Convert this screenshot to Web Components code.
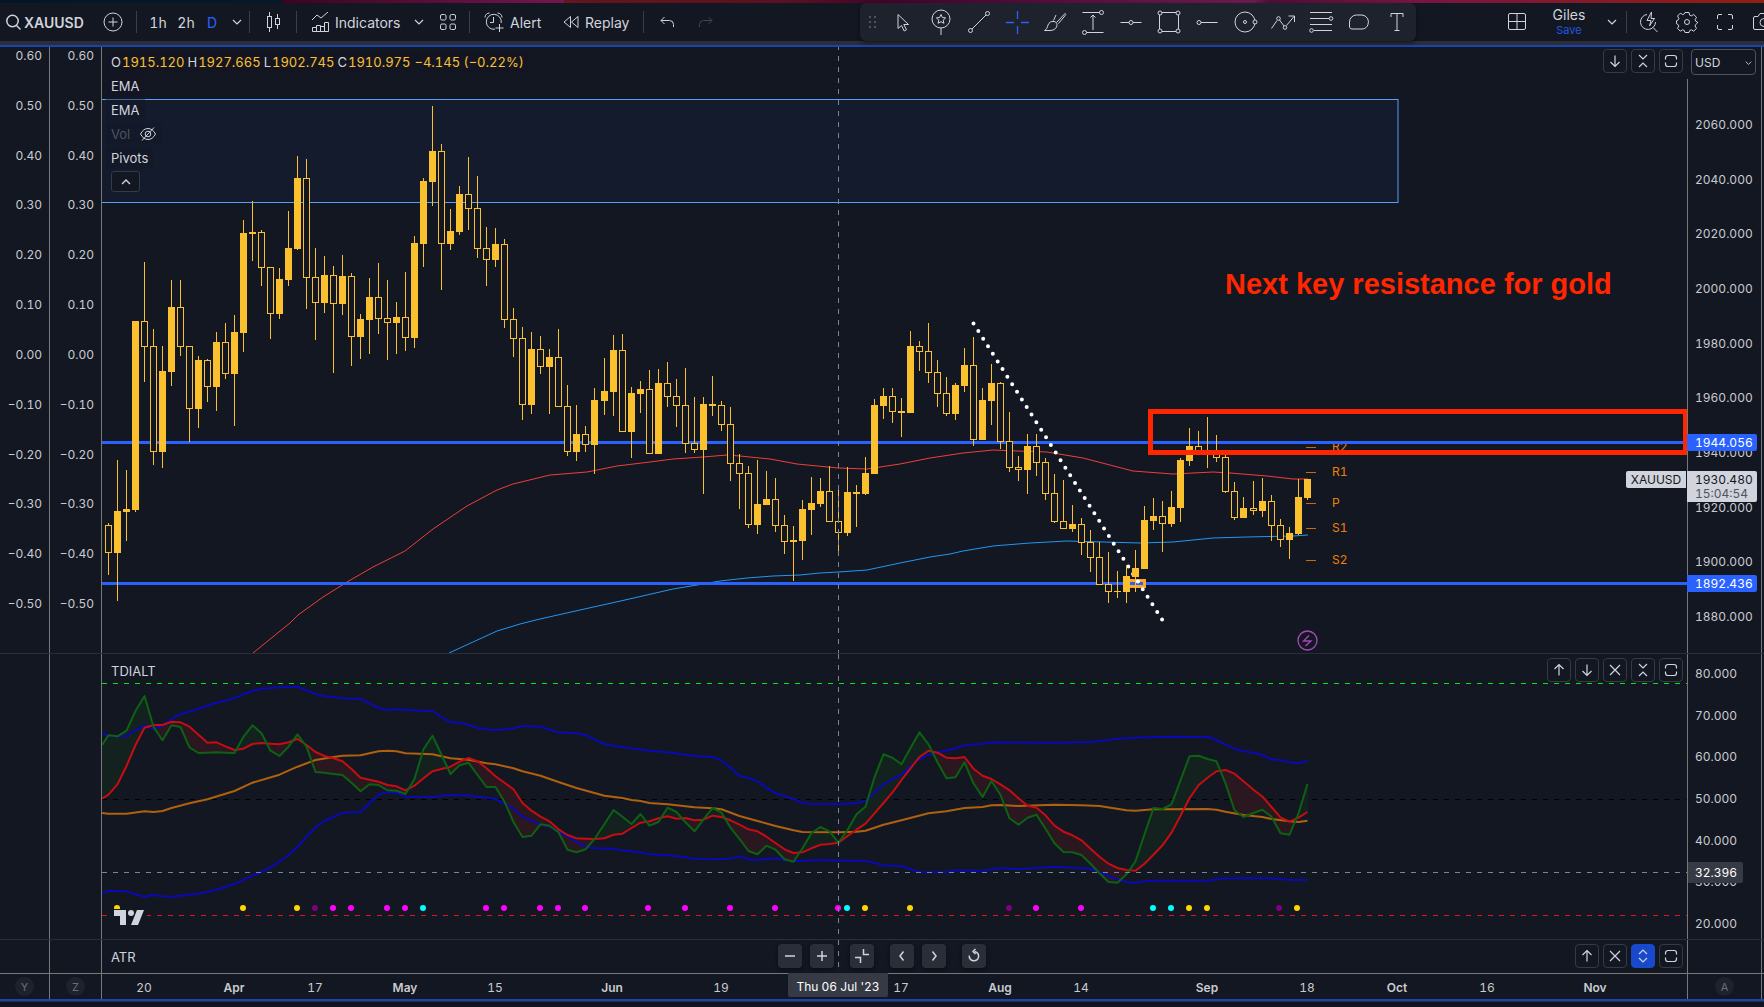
<!DOCTYPE html>
<html lang="en">
<head>
<meta charset="utf-8">
<title>XAUUSD chart</title>
<style>
  html, body { margin: 0; height: 100%; background: #11141f; }
  body { font-family: Inter, "Liberation Sans", sans-serif; color: #d1d4dc; font-variant-numeric: tabular-nums; }
</style>
</head>
<body>
<chart-app></chart-app>
<script>
const svg = (w, h, body) => `<svg width="${w}" height="${h}" viewBox="0 0 ${w} ${h}" fill="none" stroke="currentColor" aria-hidden="true">${body}</svg>`;

const ICONS = {
  search: svg(16, 18, '<circle cx="7.5" cy="8" r="5.7" stroke-width="1.5"/><path d="M11.5 12.5l4 4" stroke-width="1.5"/>'),
  plus: svg(20, 20, '<circle cx="10" cy="10" r="9"/><path d="M10 5.5v9M5.5 10h9"/>'),
  chevron: svg(10, 6, '<path d="M1 1l4 4 4-4" stroke-width="1.2"/>'),
  candles: svg(16, 22, '<path d="M4.5 1v4M4.5 17v4M12.5 3v4M12.5 14v4"/><rect x="2.5" y="5.5" width="4" height="11"/><rect x="10.5" y="7.5" width="4" height="6"/>'),
  indicators: svg(20, 20, '<path d="M1 8l5-5 4 3 7-6M1.5 19.5v-4h4v4zM5.5 19.5v-6h4v6zM9.5 19.5v-5h4v5zM13.5 19.5v-9h4v9z"/>'),
  grid: svg(18, 18, '<rect x="1.5" y="1.5" width="5.5" height="5.5" rx="1.5"/><rect x="11" y="1.5" width="5.5" height="5.5" rx="1.5"/><rect x="1.5" y="11" width="5.5" height="5.5" rx="1.5"/><rect x="11" y="11" width="5.5" height="5.5" rx="1.5"/>'),
  alert: svg(20, 20, '<path d="M11 17.2a7.5 7.5 0 1 1 6.2-6.2M9.5 5v5.5H6M1 5.5a4.5 4.5 0 0 1 4.5-4.5M18 5.5A4.5 4.5 0 0 0 13.5 1M15.500 12v8M11.5 16h8"/>'),
  replay: svg(16, 14, '<path d="M7.5 1.5v11L1 7zM15 1.5v11L8.500 7z" stroke-linejoin="round"/>'),
  undo: svg(15, 12, '<path d="M4.5 1L1 4.5 4.5 8M1 4.5h8.5a4 4 0 0 1 4 4V11"/>'),
  redo: svg(15, 12, '<path d="M10.5 1L14 4.5 10.5 8M14 4.5H5.5a4 4 0 0 0-4 4V11"/>'),
  grip: svg(10, 14, '<g fill="currentColor" stroke="none"><rect x="1" y="1" width="2" height="2"/><rect x="6" y="1" width="2" height="2"/><rect x="1" y="6" width="2" height="2"/><rect x="6" y="6" width="2" height="2"/><rect x="1" y="11" width="2" height="2"/><rect x="6" y="11" width="2" height="2"/></g>'),
  cursor: svg(28, 28, '<path d="M9 6.5v14l3.5-3 2.7 5.5 2.3-1.2-2.7-5.3h4.7z"/>'),
  pin: svg(28, 28, '<circle cx="14" cy="11" r="9"/><path d="M14 20v7M14 6.5l1.4 3 3.2.4-2.4 2.2.7 3.2-2.9-1.6-2.9 1.6.7-3.2-2.4-2.2 3.2-.4z"/>'),
  line: svg(28, 28, '<circle cx="22.5" cy="5.5" r="2"/><circle cx="5.5" cy="22.5" r="2"/><path d="M21 7L7 21"/>'),
  cross: svg(28, 28, '<path d="M14.5 3v8M14.5 18v8M3 14.5h8M18 14.5h8" stroke-width="1.3"/>'),
  brush: svg(28, 28, '<path d="M3.5 22.500c2.500-1 2.500-3 3.500-5.500s3-4 6-3.500 3.500 3 2.500 5.500-4 3.500-6.500 3.500zM15.500 14.500L24.500 5M12.500 12.500l2.500-5.500M17.500 15.500L25 6.500"/>'),
  position: svg(28, 28, '<circle cx="22.5" cy="4.5" r="2"/><circle cx="5.5" cy="24.5" r="2"/><path d="M3.5 4.5h17M7.5 24.5h17M14 22V7M11.5 9.5L14 7l2.5 2.5"/>'),
  hline: svg(28, 28, '<circle cx="14" cy="14.5" r="2"/><path d="M3.5 14.5H12M16 14.5h8.5"/>'),
  rect: svg(28, 28, '<circle cx="5" cy="5" r="2"/><circle cx="23" cy="5" r="2"/><circle cx="5" cy="23" r="2"/><circle cx="23" cy="23" r="2"/><path d="M7 4.5h14M7 23.5h14M4.5 7v14M23.5 7v14"/>'),
  ray: svg(28, 28, '<circle cx="6" cy="14.5" r="2"/><path d="M8 14.5h16.5"/>'),
  circle: svg(28, 28, '<circle cx="14" cy="14" r="10"/><circle cx="14" cy="14" r="1.5"/><circle cx="24" cy="14" r="2" fill="#1e222d"/>'),
  path: svg(28, 28, '<path d="M2.5 20.5l5.5-8M10.5 12l4.5 6M17.500 17.5l7.5-9M19.5 8h6v6"/><circle cx="9.5" cy="10.5" r="1.8"/><circle cx="16" cy="19.5" r="1.8"/>'),
  fib: svg(28, 28, '<path d="M3 4.5h22M3 10.5h19M3 16.5h22M7 22.5h18"/><circle cx="24" cy="10.5" r="1.8"/><circle cx="4.5" cy="22.5" r="1.8"/>'),
  shape: svg(28, 28, '<path d="M4.5 14a7 7 0 0 1 7-7h5.5a7 7 0 0 1 6 9.5c-1 2.5-2.5 4.5-6 4.5H7c-2 0-2.5-1.5-2.5-3z"/>'),
  text: svg(28, 28, '<path d="M8 9V5.5h12V9M14 5.5v17M11.5 22.5h5"/>'),
  layout: svg(20, 20, '<rect x="1.5" y="1.5" width="17" height="16" rx="1.5"/><path d="M10 1.5v16M1.5 9.5h17"/>'),
  quick: svg(20, 22, '<path d="M8 3.500a7.500 7.500 0 1 0 8.500 7.500M14 16.500l4.500 4.500M12.500 1L8 9.500h4l-1.500 5.500 5-7.500h-3.500z"/>'),
  gear: svg(22, 22, '<circle cx="11" cy="11" r="2.5"/><path d="M9 1.5h4l.7 2.700 1.600.7 2.400-1.400 2.800 2.800-1.400 2.400.7 1.600 1.700.7v1l-2 1.700-.4 1.300 1.400 2.400-2.800 2.800-2.400-1.400-1.600.7-.7 2h-4l-.7-2-1.600-.7-2.400 1.400-2.800-2.800 1.400-2.400-.7-1.300-1.700-1v-3l1.700-.7.7-1.600-1.400-2.400 2.800-2.800 2.400 1.400 1.600-.7z"/>'),
  full: svg(18, 18, '<path d="M1.5 6V3a1.5 1.5 0 0 1 1.5-1.5h3M12 1.5h3A1.5 1.5 0 0 1 16.500 3v3M16.5 12v3a1.5 1.5 0 0 1-1.5 1.5h-3M6 16.5H3A1.5 1.5 0 0 1 1.5 15v-3"/>'),
  camera: svg(24, 20, '<path d="M1.5 16V6A1.5 1.5 0 0 1 3 4.5h3l2-3h7l2 3h3A1.5 1.5 0 0 1 21.5 6v10a1.5 1.5 0 0 1-1.5 1.5H3A1.5 1.5 0 0 1 1.5 16z"/><circle cx="12" cy="10.5" r="4"/>'),
  up: svg(16, 16, '<path d="M8 13.5v-11M3.5 7L8 2.5 12.5 7" stroke-width="1.2"/>'),
  down: svg(16, 16, '<path d="M8 2.5v11M3.5 9L8 13.5 12.5 9" stroke-width="1.2"/>'),
  close: svg(16, 16, '<path d="M3 3l10 10M13 3L3 13" stroke-width="1.2"/>'),
  fold: svg(16, 16, '<path d="M4 2l4 4 4-4M4 14l4-4 4 4" stroke-width="1.2"/>'),
  unfold: svg(16, 16, '<path d="M4 6l4-4 4 4M4 10l4 4 4-4" stroke-width="1.2"/>'),
  max: svg(16, 16, '<path d="M2.5 6.5V5A2.5 2.5 0 0 1 5 2.5h6A2.5 2.5 0 0 1 13.5 5v1.5M2.5 9.5V11A2.5 2.5 0 0 0 5 13.5h6a2.5 2.5 0 0 0 2.5-2.5V9.5" stroke-width="1.2"/>'),
  eyeoff: svg(18, 16, '<path d="M1.5 8c2-3.700 4.500-5.500 7.500-5.500s5.500 1.800 7.500 5.500c-2 3.700-4.500 5.500-7.500 5.500S3.500 11.700 1.500 8zM3 14.500L15 1.500"/><circle cx="9" cy="8" r="2.8"/>'),
  collapse: svg(10, 6, '<path d="M1 5l4-4 4 4" stroke-width="1.4"/>'),
  minus: svg(16, 16, '<path d="M3 8h10" stroke-width="1.5"/>'),
  add: svg(16, 16, '<path d="M3 8h10M8 3v10" stroke-width="1.5"/>'),
  shrink: svg(16, 16, '<path d="M9.5 1v5.5H15M1 9.5h5.5V15" stroke-width="1.5"/>'),
  left: svg(16, 16, '<path d="M9.5 3.5L6 8l3.5 4.5" stroke-width="1.5"/>'),
  right: svg(16, 16, '<path d="M6.5 3.5L10 8l-3.5 4.5" stroke-width="1.5"/>'),
  reset: svg(16, 16, '<path d="M8.5 3.5a4.7 4.7 0 1 1-5.2 4M9.5 1L7 3.5 9.5 6" stroke-width="1.5"/>')
};

function define(name, css, html) {
  const template = document.createElement('template');
  customElements.define(name, class extends HTMLElement {
    connectedCallback() {
      if (this.shadowRoot) return;
      template.innerHTML = `<style>*{box-sizing:border-box}button{font:inherit;color:inherit;background:none;border:0;padding:0;margin:0}svg{display:block;flex:none}${css}</style>${typeof html === 'function' ? html(this) : html}`;
      this.attachShadow({ mode: 'open' }).append(template.content.cloneNode(true));
    }
  });
}

/* ---------- toolbar ---------- */

define('tool-button', `
  :host { display: flex; height: 38px; flex: none; }
  button { flex: 1; display: flex; align-items: center; justify-content: center; gap: 6px; font-size: 14px; white-space: nowrap; overflow: hidden; }
  :host([start]) button { justify-content: flex-start; padding-left: 11px; }
  :host([icon=indicators]) button { gap: 4px; }
  :host([symbol]) button { justify-content: flex-start; padding-left: 5px; gap: 3px; font-weight: 600; }
  :host([edge]) button { justify-content: flex-start; padding-left: 8px; }
  :host([active]) { color: #2962ff; }
  :host([dim]) { color: #434651; }`,
  el => `<button type="button" aria-label="${el.getAttribute('label') || el.textContent.trim()}">${ICONS[el.getAttribute('icon')] || ''}<slot></slot></button>`);

define('tool-divider', `:host { display: block; flex: none; width: 1px; height: 22px; margin: 0 3px; background: #3a3e49; }`, '');

define('drawing-toolbar', `
  :host { display: flex; align-items: center; height: 38px; width: 556px; padding-left: 8px; background: #1e222d; border-radius: 6px; box-shadow: 0 2px 4px rgba(0,0,0,.5); }
  tool-button { width: 38px; }
  .grip { display: flex; width: 16px; color: #50535e; }`,
  `<span class="grip">${ICONS.grip}</span>` +
  [['cursor', 'Cursor'], ['pin', 'Favourites'], ['line', 'Trend line'], ['cross', 'Cross'], ['brush', 'Brush'], ['position', 'Date and price range'], ['hline', 'Horizontal line'],
   ['rect', 'Rectangle'], ['ray', 'Horizontal ray'], ['circle', 'Circle'], ['path', 'Path'], ['fib', 'Fib retracement'], ['shape', 'Shape'], ['text', 'Text']]
    .map(([i, l]) => `<tool-button icon="${i}" label="${l}"${i === 'cross' ? ' active' : ''}></tool-button>`).join(''));

define('top-toolbar', `
  :host { display: flex; align-items: center; position: relative; height: 38px; background: #131722; }
  .right { margin-left: auto; display: flex; align-items: center; }
  drawing-toolbar { position: absolute; left: 860px; top: 0; }
  .w18 { width: 18px } .w20 { width: 20px } .w22 { width: 22px } .w32 { width: 32px } .w36 { width: 36px } .w38 { width: 38px } .w40 { width: 40px }
  .sym { width: 93px } .ind { width: 108px } .alert { width: 79px } .replay { width: 88px }
  .layout { width: 64px; display: flex; flex-direction: column; align-items: center; font-size: 14px; line-height: 16px; }
  .layout a { font-size: 11px; line-height: 14px; color: #2257e0; text-decoration: none; }`,
  `<tool-button class="sym" symbol icon="search">XAUUSD</tool-button>
   <tool-button class="w40" icon="plus" label="Compare"></tool-button><tool-divider></tool-divider>
   <tool-button class="w36">1h</tool-button><tool-button class="w20">2h</tool-button><tool-button class="w32" active>D</tool-button>
   <tool-button class="w18" icon="chevron" label="Intervals"></tool-button><tool-divider></tool-divider>
   <tool-button class="w40" icon="candles" label="Candles"></tool-button><tool-divider></tool-divider>
   <tool-button class="ind" start icon="indicators">Indicators</tool-button><tool-button class="w22" icon="chevron" label="Favourite indicators"></tool-button>
   <tool-button class="w36" icon="grid" label="Templates"></tool-button><tool-divider></tool-divider>
   <tool-button class="alert" start icon="alert">Alert</tool-button><tool-button class="replay" start icon="replay">Replay</tool-button><tool-divider></tool-divider>
   <tool-button class="w40" icon="undo" label="Undo"></tool-button><tool-button class="w36" icon="redo" dim label="Redo"></tool-button>
   <div class="right">
     <tool-button class="w40" icon="layout" label="Layout"></tool-button>
     <div class="layout"><span>Giles</span><a href="#save">Save</a></div>
     <tool-button class="w22" icon="chevron" label="Manage layouts"></tool-button><tool-divider></tool-divider>
     <tool-button class="w38" icon="quick" label="Quick search"></tool-button><tool-button class="w38" icon="gear" label="Settings"></tool-button>
     <tool-button class="w38" icon="full" label="Fullscreen"></tool-button><tool-button class="w20" edge icon="camera" label="Snapshot"></tool-button>
   </div>
   <drawing-toolbar></drawing-toolbar>`);

/* ---------- building blocks of the chart ---------- */

define('pane-buttons', `
  :host { display: flex; gap: 4px; position: absolute; right: 4px; top: var(--top, 4px); }
  button { width: 24px; height: 24px; display: grid; place-items: center; border: 1px solid #363a45; border-radius: 4px; background: #131722; }
  button.unfold { background: #1848cc; border-color: #1848cc; }`,
  el => el.getAttribute('icons').split(' ').map(i => `<button type="button" class="${i}" aria-label="${i}">${ICONS[i]}</button>`).join(''));

define('value-scale', `
  :host { display: flex; flex-direction: column; justify-content: space-between; flex: 1; font-size: 12px; line-height: 16px; color: #c9cbd0; }
  :host([align=right]) { text-align: right; padding: 1px 7px 41px 0; }
  :host([align=left]) { padding: 38px 0 28px 7px; border-left: 1px solid #787878; }
  :host([align=left][compact]) { padding: 12px 0 7px 7px; border-left: 0; }`,
  el => el.getAttribute('values').split(' ').map(v => `<span>${v}</span>`).join(''));

define('price-tag', `
  :host { position: absolute; left: 0; padding-left: 8px; height: 17px; width: 70px; font-size: 12px; line-height: 17px; background: var(--bg); color: #fff; border-radius: 0 2px 2px 0; }
  :host([name]) { left: auto; right: 1px; width: 60px; padding: 0; text-align: center; border-radius: 2px 0 0 2px; color: #131722; }
  :host([tall]) { height: 31px; color: #131722; }
  :host([cross]) { height: 21px; width: 55px; line-height: 21px; padding-left: 7px; }`, '<slot></slot>');

define('chart-row', `
  :host { display: flex; flex: none; border-top: 1px solid var(--line, #2a2e39); padding-right: 2px; position: relative; }
  :host([main]) { flex: 1; border-top: 0; min-height: 606px; }
  .cell { display: flex; position: relative; }
  .y { width: 50px; border-right: 1px solid #787878; } .z { width: 52px; border-right: 1px solid #787878; }
  .pane { flex: 1; position: relative; min-width: 0; }
  .price { width: 75px; flex-direction: column; border-right: 1px solid #787878; border-left: 1px solid #787878; }
  :host([main]) .price { border-left: 0; }`,
  `<div class="cell y"><slot name="y"></slot></div><div class="cell z"><slot name="z"></slot></div>
   <div class="pane"><slot></slot></div><div class="cell price"><slot name="price"></slot></div>
   <slot name="overlay"></slot>`);

define('scale-badge', `
  :host { display: flex; flex: 1; align-items: center; justify-content: center; }
  button { width: 19px; height: 19px; border-radius: 50%; background: #1e222d; color: #6a6d78; font-size: 11px; }`,
  '<button type="button"><slot></slot></button>');

define('currency-picker', `
  :host { display: flex; height: 32px; padding: 2px 5px 0 4px; position: relative; }
  select { appearance: none; width: 100%; height: 26px; padding: 0 3px; background: #131722; color: #d1d4dc; border: 1px solid #50535e; border-radius: 4px; font: 12px Inter, sans-serif; }
  svg { position: absolute; right: 9px; top: 13px; width: 7px; }`,
  `<select aria-label="Currency"><option>USD</option></select>${ICONS.chevron}`);

/* ---------- price pane ---------- */

// One bar per entry: high, body top, body bottom, low (y in the window) and 1 for a rising bar.
const BARS = `523 525 553 575 0|460 511 553 601 1|470 509 512 541 1|321 321 510 512 1|262 321 347 382 0|329 346 452 465 0|346 371 452 468 1|280 307 372 386 1|280 307 347 356 0|346 346 409 442 0
356 360 409 428 1|359 360 387 402 0|332 342 387 411 1|323 342 374 379 0|315 332 374 426 1|220 233 333 352 1|201 232 234 261 1|230 232 268 286 0|267 267 314 339 0|268 279 314 319 1
211 248 280 286 1|156 178 249 250 1|159 178 278 309 0|248 277 303 340 0|256 275 303 313 1|266 275 304 373 0|255 276 304 315 1|273 276 337 366 0|314 319 337 359 1|278 297 320 354 1
263 297 319 334 0|280 318 323 360 0|302 317 323 354 1|272 317 338 351 0|236 243 338 348 1|178 181 244 267 1|106 151 182 206 1|144 151 244 290 0|209 231 244 250 1|186 194 232 235 1
157 194 209 230 0|176 208 249 258 0|227 248 260 286 0|228 244 260 267 1|239 244 320 328 0|308 319 339 357 0|327 338 405 420 0|332 349 405 414 1|336 349 367 374 0|349 357 367 414 1
329 357 407 407 0|385 406 452 456 0|405 434 452 461 1|426 434 445 452 0|388 400 445 474 1|358 391 401 415 1|335 350 392 416 1|334 350 432 432 0|387 393 432 458 1|381 389 394 413 1
370 389 454 454 0|369 383 454 454 1|362 383 397 407 0|379 396 406 427 0|368 405 444 453 0|397 443 450 453 0|397 404 450 494 1|376 404 406 416 1|401 405 425 431 0|407 424 464 481 0
454 463 474 509 0|466 473 525 528 0|460 504 525 534 1|471 499 505 505 1|478 499 526 532 0|515 525 542 554 0|526 540 542 581 1|500 509 541 560 1|477 503 510 535 1|478 491 504 507 1
466 491 522 522 0|490 521 533 551 0|467 492 533 536 1|485 492 494 527 1|457 473 494 495 1|399 405 474 474 1|388 396 406 419 1|388 396 412 423 0|398 411 413 437 1|331 346 413 413 1
341 346 352 371 0|323 351 373 383 0|360 372 394 407 0|377 393 414 416 0|383 385 414 420 1|348 365 386 392 1|337 365 440 446 0|388 400 440 440 1|364 383 401 425 1|382 383 442 449 0
412 441 468 472 0|456 467 470 481 0|434 446 470 494 1|434 446 463 476 0|458 462 494 500 0|474 493 522 523 0|480 521 529 529 0|505 524 529 532 1|518 524 543 555 0|530 542 558 572 0
542 557 585 585 0|552 584 592 603 0|571 591 592 598 1|565 576 592 603 1|550 568 577 592 1|506 520 569 569 1|498 516 521 530 1|501 516 524 552 0|491 507 524 527 1|458 460 508 522 1
428 446 461 466 1|431 446 452 452 0|417 451 454 468 0|435 453 458 462 0|455 457 492 493 0|482 491 518 520 0|497 508 518 518 1|481 508 511 515 0|478 501 511 517 1|495 501 526 541 0
519 525 540 547 0|527 533 540 559 1|479 497 534 535 1|479 479 498 500 1`.split(/[|\n]/).map(r => r.split(' ').map(Number));

// Left pixel of a bar's wick.
const barX = i => 108 + 9 * i + (i >= 55 ? 1 : 0) + (i >= 127 ? 1 : 0);

const candles = BARS.map(([h, t, b, l, up], i) => {
  const x = barX(i);
  return `<path d="M${x + .5} ${h}V${l}" stroke="#fbc02d"/>` + (up
    ? `<rect x="${x - 3}" y="${t}" width="7" height="${b - t}" fill="#fbc02d"/>`
    : `<rect x="${x - 2.5}" y="${t + .5}" width="6" height="${b - t - 1}" fill="#131722" stroke="#fbc02d"/>`);
}).join('');

const EMA_FAST = '253,653 290,623 298,615 323,597 347,582 373,567 405,551 433,529 467,506 497,490 513,484 550,475 587,472 617,466 650,462 673,459 703,457 727,455 740,456 770,459 797,464 838,468 867,469 900,464 930,458 950,455 963,453 993,450 1017,451 1047,452 1083,458 1133,471 1173,474 1213,472 1230,473 1267,476 1293,479 1308,479';
const EMA_SLOW = '449,653 473,642 497,631 520,624 540,619 580,610 625,600 673,589 703,584 720,581 747,578 773,576 800,575 820,573 838,572 867,570 900,563 930,557 950,554 963,551 993,546 1030,543 1067,541 1103,542 1140,543 1173,542 1213,538 1247,537 1293,536 1308,535';

const pivots = [['R2', 447], ['R1', 472], ['P', 503], ['S1', 528], ['S2', 560]]
  .map(([n, y]) => `<path d="M1306 ${y + .5}h10" stroke="#c46d0c"/><text x="1332" y="${y + 4}">${n}</text>`).join('');

define('price-pane', `
  :host { display: block; position: absolute; inset: 0; overflow: hidden; }
  .plot { position: absolute; inset: 0; width: 100%; height: 100%; }
  text { font-size: 12px; fill: #ef7f0b; }
  .legend { position: relative; display: flex; flex-direction: column; align-items: flex-start; padding: 4px 0 0 4px; font-size: 13px; line-height: 22px; gap: 2px; }
  .legend > div { display: flex; height: 22px; padding: 0 5px; background: rgba(19,23,34,.4); align-items: flex-start; }
  .legend .ohlc { gap: 3px; }
  .ohlc b { font-weight: 400; color: #fbc02d; margin-left: 1px; }
  .legend .off { color: #50535e; gap: 9px; } .off svg { color: #d1d4dc; margin-top: 3px; }
  .legend button { margin: 0 0 0 5px; width: 29px; height: 21px; display: grid; place-items: center; border: 1px solid #363a45; border-radius: 3px; background: #131722; }
  .box { position: absolute; left: 1046px; right: -1px; top: 362px; height: 46px; border: 5px solid #ff2600; }
  .note { position: absolute; left: 1123px; top: 219px; font: bold 29px/36px "Liberation Sans", sans-serif; color: #ff2600; white-space: nowrap; }`,
  `<svg class="plot" role="img" aria-label="XAUUSD daily candles">
    <rect x="-2" y="52.5" width="1298" height="103" fill="#2f7fff" fill-opacity=".05" stroke="#5b9cf6"/>
    <g transform="translate(-102 -47)" fill="none">
      <polyline points="${EMA_FAST}" stroke="#ef3f38"/>
      <polyline points="${EMA_SLOW}" stroke="#2196f3"/>
      ${pivots}
      <circle cx="1307.5" cy="640.5" r="9.5" stroke="#ab47bc" stroke-width="1.3"/>
      <path d="M1309 635.5l-5.500 5.500h7.500l-5.500 5" stroke="#ab47bc" stroke-width="1.3"/>
    </g>
    <rect x="0" y="394" width="100%" height="3" fill="#2962ff"/>
    <rect x="0" y="535" width="100%" height="3" fill="#2962ff"/>
    <g transform="translate(-102 -47)" fill="none">
      <rect x="1128.5" y="580.5" width="16" height="6" stroke="#ffa726" stroke-width="3" fill="#2962ff"/>
      <path d="M973.5 323.5L1163 621" stroke="#fff" stroke-width="4" stroke-linecap="round" stroke-dasharray="0 9"/>
      ${candles}
      <path d="M838.5 45V653" stroke="#758696" stroke-dasharray="5 6"/>
    </g>
  </svg>
  <div class="legend">
    <div class="ohlc"><span>O<b>1915.120</b></span><span>H<b>1927.665</b></span><span>L<b>1902.745</b></span><span>C<b>1910.975</b></span><span><b>−4.145 (−0.22%)</b></span></div>
    <div>EMA</div><div>EMA</div><div class="off">Vol ${ICONS.eyeoff}</div><div>Pivots</div>
    <button type="button" aria-label="Collapse legend">${ICONS.collapse}</button>
  </div>
  <div class="note">Next key resistance for gold</div>
  <pane-buttons icons="down fold max" style="--top:2px"></pane-buttons>
  <div class="box"></div>
  <price-tag name style="top:424px;--bg:#d1d4dc">XAUUSD</price-tag>`);

/* ---------- oscillator pane ---------- */

// Samples are thirds of a pixel, measured from 6px below the pane's top edge; index -1 is the left edge.
const toY = v => 6 + v / 3;
const toX = i => i < 0 ? 0 : barX(i) + .5 - 102;
const dense = s => s.split(' ').map((v, i) => [toX(i - 1), toY(+v)]);
const sparse = s => s.split(' ').map(p => p.split(':')).map(([i, v]) => [toX(+i), toY(+v)]);
const points = a => a.map(([x, y]) => `${x.toFixed(1)},${y.toFixed(1)}`).join(' ');

const FAST = dense('255 226 229 212 153 108 200 241 196 201 262 279 278 277 278 279 230 196 220 272 288 260 223 260 336 338 342 345 368 394 373 375 391 392 402 356 268 227 284 342 316 308 345 381 381 425 486 531 527 493 497 517 569 577 568 537 492 450 470 492 462 497 486 443 456 487 514 478 444 458 503 537 573 583 557 569 598 605 565 519 501 514 548 510 463 440 352 283 293 313 264 217 253 307 355 352 307 370 411 363 405 475 494 473 464 506 550 576 577 585 611 640 666 668 643 604 523 444 447 433 361 289 287 297 304 370 451 471 459 449 470 520 524 460 372');
const SLOW = dense('416 404 373 318 255 203 195 195 185 187 200 224 248 247 259 270 266 252 249 251 253 247 237 255 276 288 295 304 327 353 359 365 375 379 391 377 355 334 327 320 305 294 304 325 349 368 388 429 452 470 484 508 525 535 536 537 535 524 521 504 488 484 475 469 476 474 481 479 467 471 481 494 508 514 530 549 568 579 577 565 554 552 548 528 509 491 460 429 397 360 325 291 272 278 293 295 291 326 347 357 373 391 415 437 443 466 497 515 526 541 566 590 611 624 630 632 611 584 556 518 467 415 376 353 334 330 341 364 389 410 441 472 485 473 456');
const UPPER = sparse('-1:219 0:228 1:229 2:229 3:210 4:197 5:206 6:197 7:176 8:162 9:155 12:128 14:114 15:103 16:93 17:86 19:82 21:80 23:102 24:108 26:115 28:117 29:130 30:144 31:150 32:148 35:153 36:153 37:171 38:187 39:188 40:194 41:204 42:208 43:210 45:205 46:198 48:200 50:217 52:220 53:225 54:238 55:252 56:257 58:265 60:272 62:277 65:288 67:291 68:302 69:323 70:347 71:354 72:364 73:383 74:400 75:408 76:416 77:429 78:432 81:433 83:429 84:423 85:398 86:373 87:357 88:344 89:319 90:297 91:284 92:277 93:272 94:265 95:256 97:252 98:247 105:248 108:247 109:246 111:240 112:236 115:232 118:230 121:231 122:230 123:240 124:254 125:266 126:274 127:278 128:285 129:298 130:301 131:307 132:310 133:303');
const MIDDLE = sparse('-1:459 0:461 2:461 4:454 5:456 6:453 7:444 9:430 11:418 14:393 16:368 19:344 21:320 23:300 25:291 26:287 28:286 30:274 31:272 32:274 33:280 36:283 38:295 40:299 42:310 43:313 45:325 46:334 48:347 50:366 52:384 55:407 57:414 58:420 59:423 60:429 62:433 65:442 67:445 68:448 70:468 72:483 74:498 76:511 77:516 81:517 83:515 84:512 86:494 88:481 91:460 93:454 95:444 97:441 98:436 99:435 101:438 105:434 108:436 110:438 113:451 114:452 116:448 122:447 123:449 124:455 126:465 128:471 129:477 131:484 132:486 133:482');
const LOWER = sparse('-1:699 0:692 2:694 3:703 4:710 5:705 6:709 7:710 10:701 12:689 14:672 16:647 17:636 18:622 19:604 20:585 21:561 22:530 23:502 24:483 25:471 26:458 28:456 29:430 30:404 31:396 32:399 33:410 36:411 38:405 40:407 42:413 43:417 45:446 46:470 48:494 49:500 50:515 51:530 52:546 53:560 54:565 56:566 57:571 59:577 60:583 62:586 64:592 65:597 67:598 69:596 70:589 71:598 72:600 74:595 76:604 77:602 79:600 81:602 84:602 86:616 88:619 90:637 93:637 94:631 97:632 99:624 101:628 105:620 109:626 110:636 111:648 112:658 113:666 114:669 115:664 116:662 122:662 124:655 129:655 131:660 133:660');

// The band between the two lines, split into the parts where the fast line is above and below.
function band(above) {
  const edge = FAST.map(([x, y], i) => [x, y, SLOW[i][1]]);
  let d = '';
  for (let i = 1; i < edge.length; i++) {
    let a = edge[i - 1], b = edge[i];
    const da = a[2] - a[1], db = b[2] - b[1], s = above ? 1 : -1;
    if (da * s <= 0 && db * s <= 0) continue;
    if (da * db < 0) {
      const k = da / (da - db), m = [a[0] + k * (b[0] - a[0]), a[1] + k * (b[1] - a[1])];
      m.push(m[1]);
      if (da * s > 0) b = m; else a = m;
    }
    d += `M${a[0]} ${a[1]}L${b[0]} ${b[1]}L${b[0]} ${b[2]}L${a[0]} ${a[2]}z`;
  }
  return d;
}

const DOTS = 'y:117 y:243 y:297 p:315 m:333 m:351 m:387 m:405 c:423 m:486 m:504 m:540 m:558 m:585 m:648 m:685 m:730 m:775 m:838 c:847 y:865 y:910 p:1009 m:1036 m:1081 c:1153 c:1171 y:1189 y:1207 p:1279 y:1297';
const DOT_COLOR = { y: '#ffd600', p: '#800080', m: '#ff00ff', c: '#00ffff' };
const dash = (y, c) => `<line x1="0" x2="100%" y1="${y}" y2="${y}" stroke="${c}" stroke-dasharray="5 6"/>`;

define('oscillator-pane', `
  :host { display: block; position: absolute; inset: 0; overflow: hidden; }
  .plot { position: absolute; inset: 0; width: 100%; height: 100%; }
  .title { position: relative; padding: 6px 0 0 9px; font-size: 13px; line-height: 22px; }`,
  `<svg class="plot" role="img" aria-label="TDIALT" fill="none">
    ${dash(29.5, '#00e61a')}${dash(145.5, '#000')}${dash(261.5, '#e0141c')}
    <path d="${band(true)}" fill="#13221e" shape-rendering="crispEdges"/><path d="${band(false)}" fill="#2b1720" shape-rendering="crispEdges"/>
    <g stroke-width="2" stroke-linejoin="round">
      <polyline points="${points(UPPER)}" stroke="#0a0ab4"/><polyline points="${points(LOWER)}" stroke="#0a0ab4"/>
      <polyline points="${points(MIDDLE)}" stroke="#b0610f"/>
      <polyline points="${points(SLOW)}" stroke="#c60d12"/><polyline points="${points(FAST)}" stroke="#0c6212"/>
    </g>
    ${DOTS.split(' ').map(d => d.split(':')).map(([c, x]) => `<circle cx="${x - 102}" cy="254" r="3" fill="${DOT_COLOR[c]}"/>`).join('')}
    <path d="M11 255h34v17h-34z" fill="#131722"/>
    <path d="M12 256h12v15h-6v-9h-6zM35 256h7l-6 15h-7z" fill="#d1d4dc"/><circle cx="29" cy="259" r="3" fill="#d1d4dc"/>
    ${dash(218.5, '#758696')}
    <path d="M736.5 0V286" stroke="#758696" stroke-dasharray="5 6"/>
  </svg>
  <div class="title">TDIALT</div>
  <pane-buttons icons="up down close fold max"></pane-buttons>`);

define('atr-pane', `
  :host { display: block; position: absolute; inset: 0; }
  .plot { position: absolute; inset: 0; width: 100%; height: 27px; }
  .title { position: relative; padding: 6px 0 0 9px; font-size: 13px; line-height: 22px; }`,
  `<svg class="plot"><path d="M736.5 0V27" stroke="#758696" stroke-dasharray="5 6"/></svg>
   <div class="title">ATR</div><pane-buttons icons="up close unfold max"></pane-buttons>`);

define('chart-navigation', `
  :host { position: absolute; left: 0; right: 0; top: 4px; display: flex; justify-content: center; gap: 16px; pointer-events: none; }
  div { display: flex; gap: 8px; }
  button { width: 24px; height: 24px; display: grid; place-items: center; border-radius: 4px; background: #2a2e39; box-shadow: 0 2px 4px rgba(0,0,0,.4); pointer-events: auto; }`,
  [['minus', 'add'], ['shrink'], ['left', 'right'], ['reset']]
    .map(g => `<div>${g.map(i => `<button type="button" aria-label="${i}">${ICONS[i]}</button>`).join('')}</div>`).join(''));

const DATES = [['20', 144], ['Apr', 234, 1], ['17', 315], ['May', 405, 1], ['15', 495], ['Jun', 612, 1], ['19', 721], ['17', 901], ['Aug', 1000, 1], ['14', 1081], ['Sep', 1207, 1], ['18', 1307], ['Oct', 1397, 1], ['16', 1487], ['Nov', 1595, 1]];
define('time-axis', `
  :host { display: block; position: absolute; inset: 0; }
  svg { width: 100%; height: 25px; }
  text { font-size: 12px; fill: #c9cbd0; text-anchor: middle; } .month { font-weight: 600; }
  .tag { position: absolute; left: 686px; top: -1px; width: 100px; height: 24px; background: #363a45; color: #fff; font-size: 12px; line-height: 27px; text-align: center; border-radius: 0 0 2px 2px; }`,
  `<svg>${DATES.map(([t, x, m]) => `<text x="${x - 102}" y="18"${m ? ' class="month"' : ''}>${t}</text>`).join('')}</svg>
   <div class="tag">Thu 06 Jul '23</div>`);

/* ---------- page ---------- */

const LEFT = '0.60 0.50 0.40 0.30 0.20 0.10 0.00 −0.10 −0.20 −0.30 −0.40 −0.50';
define('chart-app', `
  :host { display: flex; flex-direction: column; min-height: 100vh; overflow: hidden; }
  .strip { height: 3px; background: linear-gradient(90deg, #031626 0, #031a2a 16%, #3c0420 16%, #741650 32%, #64161c 32%, #5a1020 45%, #42042a 50%, #701a52 71%, #520e38 72%, #781444 80%, #90200e 100%); }
  .gap { height: 4px; background: #2b2e36; }
  main { flex: 1; display: flex; flex-direction: column; background: #131722; border-top: 2px solid #1a43b4; border-bottom: 2px solid #1a43b4; }
  .foot { height: 6px; border-top: 1px solid #2a2e39; }
  .osc { height: 286px; } .atr { height: 34px; } .time { height: 26px; --line: #787878; }
  .countdown { display: block; color: #50535e; line-height: 14px; margin-top: -1px; }`,
  `<div class="strip"></div>
   <top-toolbar></top-toolbar>
   <div class="gap"></div>
   <main>
     <chart-row main>
       <value-scale slot="y" align="right" values="${LEFT}"></value-scale>
       <value-scale slot="z" align="right" values="${LEFT}"></value-scale>
       <price-pane></price-pane>
       <currency-picker slot="price"></currency-picker>
       <value-scale slot="price" align="left" values="2060.000 2040.000 2020.000 2000.000 1980.000 1960.000 1940.000 1920.000 1900.000 1880.000"></value-scale>
       <price-tag slot="price" style="top:387px;--bg:#2962ff">1944.056</price-tag>
       <price-tag slot="price" tall style="top:424px;--bg:#d1d4dc">1930.480<span class="countdown">15:04:54</span></price-tag>
       <price-tag slot="price" style="top:528px;--bg:#2962ff">1892.436</price-tag>
     </chart-row>
     <chart-row class="osc">
       <oscillator-pane></oscillator-pane>
       <value-scale slot="price" align="left" compact values="80.000 70.000 60.000 50.000 40.000 30.000 20.000"></value-scale>
       <price-tag slot="price" cross style="top:208px;--bg:#363a45">32.396</price-tag>
     </chart-row>
     <chart-row class="atr"><atr-pane></atr-pane><chart-navigation slot="overlay"></chart-navigation></chart-row>
     <chart-row class="time">
       <scale-badge slot="y">Y</scale-badge><scale-badge slot="z">Z</scale-badge>
       <time-axis></time-axis>
       <scale-badge slot="price">A</scale-badge>
     </chart-row>
   </main>
   <div class="foot"></div>`);
</script>
</body>
</html>
